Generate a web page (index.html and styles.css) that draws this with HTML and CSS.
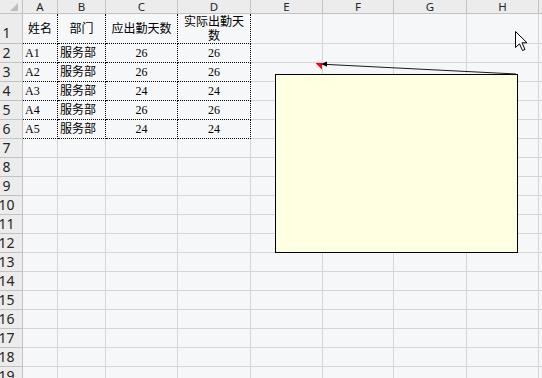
FILE: index.html
```html
<!DOCTYPE html>
<html>

<head>
    <meta charset="UTF-8">
    <title>Sheet1</title>
    <link rel="stylesheet" href="styles.css">

    <script type="application/javascript">
        const columns = ["A", "B", "C", "D", "E", "F", "G", "H", ""];
        const data = [
            ["姓名", "部门", "应出勤天数", "实际出勤天数"],
            ["A1", "服务部", "26", "26"],
            ["A2", "服务部", "26", "26"],
            ["A3", "服务部", "24", "24"],
            ["A4", "服务部", "26", "26"],
            ["A5", "服务部", "24", "24"]
        ];
        const row_count = 19;

        window.onload = function () {
            let el_sheet = document.getElementById("sheet");
            let html = '<div class="corner"><span class="select-all"></span></div>';

            for (let c = 0; c < columns.length; c++)
                html += '<div class="col-head">' + columns[c] + '</div>';

            for (let r = 0; r < row_count; r++) {
                let row_class = r == 0 ? "row-head first" : "row-head";
                html += '<div class="' + row_class + '"><span>' + (r + 1) + '</span></div>';

                for (let c = 0; c < columns.length; c++) {
                    let value = (data[r] && data[r][c]) || "";
                    let cls = "cell";
                    if (r < data.length && c < 4) {
                        cls += " data";
                        if (r == 0 || c > 1) cls += " center";
                        if (r == 0) cls += " title";
                    }
                    html += '<div class="' + cls + '">' + value + '</div>';
                }
            }

            el_sheet.innerHTML = html;
        };
    </script>
</head>

<body>
    <div class="sheet" id="sheet"></div>

    <div class="comment-box"></div>

    <svg class="overlay" width="542" height="378" viewBox="0 0 542 378">
        <!-- comment indicator on E3 -->
        <polygon points="315.5,63 322,63 322,69.5" fill="#ff0000" />
        <!-- leader line -->
        <line x1="516" y1="74" x2="324" y2="64.3" stroke="#1a1a1a" stroke-width="1" />
        <polygon points="321,64 327,61.6 327,66.8" fill="#000" />
        <!-- mouse pointer -->
        <path d="M515.5,31.5 L515.5,47.5 L519.5,43.8 L522.5,50.5 L525,49.5 L522,42.8 L527,42.8 Z"
              fill="#fff" stroke="#000" stroke-width="1" stroke-linejoin="miter" />
    </svg>
</body>

</html>
```

FILE: styles.css
```css
body {
    margin: 0;
    width: 542px;
    height: 378px;
    overflow: hidden;
    background: #f6f7f9;
    position: relative;
}

.sheet {
    display: grid;
    grid-template-columns: 23px 35px 48px 72px 73px 72px 71px 73px 72px 1fr;
    grid-template-rows: 14px 30px;
    grid-auto-rows: 19px;
    font-family: "Liberation Serif", "Noto Sans CJK SC", serif;
    font-size: 12px;
    color: #000;
}

.sheet > div {
    box-sizing: border-box;
    border-right: 1px solid #d6d6d6;
    border-bottom: 1px solid #d6d6d6;
    white-space: nowrap;
}

.corner {
    background: #ececec;
    position: relative;
}

.sheet > .corner,
.sheet > .col-head,
.sheet > .row-head {
    border-color: #c3c3c3;
}

.select-all {
    position: absolute;
    right: 4px;
    bottom: 2px;
    width: 0;
    height: 0;
    border-left: 8px solid transparent;
    border-bottom: 8px solid #bdbdbd;
}

.col-head {
    background: #ececec;
    font-family: "Noto Sans", sans-serif;
    font-size: 11.5px;
    line-height: 13px;
    text-align: center;
    color: #262626;
}

.row-head {
    background: #ececec;
    font-family: "Noto Sans", sans-serif;
    font-size: 14px;
    line-height: 18px;
    color: #262626;
    display: flex;
    justify-content: center;
    align-items: flex-end;
    padding-right: 9px;
}

.row-head span {
    flex: none;
}

.row-head.first {
    padding-bottom: 1px;
}

.cell {
    background: #f6f7f9;
    padding: 0 2px;
    line-height: 18px;
}

.sheet > .cell.data {
    border-right: 1px dotted #000;
    border-bottom: 1px dotted #000;
}

.cell.center {
    text-align: center;
}

.cell.title {
    white-space: normal;
    line-height: 14px;
    display: flex;
    align-items: center;
    justify-content: center;
    padding: 0 1px;
}

.comment-box {
    position: absolute;
    left: 275px;
    top: 74px;
    width: 241px;
    height: 177px;
    background: #ffffe1;
    border: 1px solid #000;
}

.overlay {
    position: absolute;
    left: 0;
    top: 0;
}
```
